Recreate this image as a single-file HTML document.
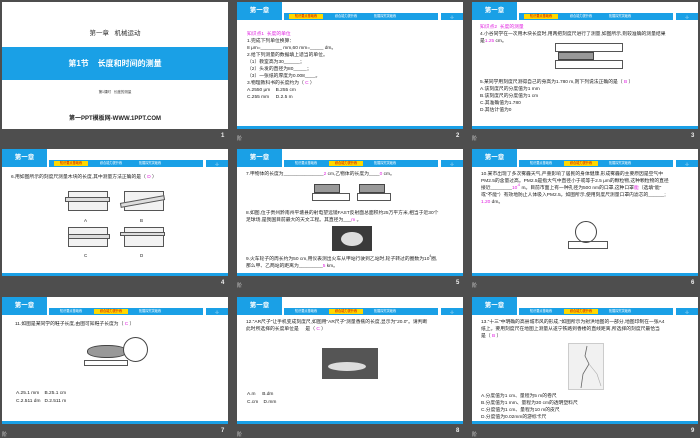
<!DOCTYPE html>
<html><head><meta charset="utf-8">
<style>
*{margin:0;padding:0;box-sizing:border-box}
body{width:700px;height:438px;background:#4e4e4e;position:relative;overflow:hidden;font-family:"Liberation Sans","Noto Sans CJK SC",sans-serif;color:#222}
sup{line-height:0;font-size:3.2px;vertical-align:top;position:relative;top:-0.5px}
.s{position:absolute;width:226px;height:127px;background:#fff;overflow:hidden}
.s .bb{position:absolute;left:0;bottom:0;width:100%;height:3px;background:#1aa0e6}
.ch{position:absolute;left:0;top:0;width:45px;height:18px;background:#1aa0e6;color:#fff;font-size:6.5px;font-weight:bold;text-align:center;line-height:18px}
.tb{position:absolute;left:47px;top:11px;width:154px;height:7px;background:#1aa0e6;font-size:3.2px;color:#fff;line-height:7px}
.tb span{position:absolute;top:1px;height:5px;line-height:5px;width:34px;text-align:center}
.tb span.y{background:#ffd800;color:#c00}
.pn{position:absolute;left:204px;top:11px;width:22px;height:7px;background:#1aa0e6;color:#fff;font-size:4px;text-align:center;line-height:7px}
.t{position:absolute;font-size:4.8px;line-height:7px;height:7px;white-space:nowrap;color:#1a1a1a}
.m{color:#e020e0}
.num{position:absolute;color:#eee;font-size:6px;font-weight:bold}
.ic{position:absolute;color:#ccc;font-size:5px}
.box{position:absolute;border:0.6px solid #555}
</style></head><body>

<!-- Slide 1 -->
<div class="s" style="left:2px;top:2px">
 <div style="position:absolute;top:25px;width:100%;text-align:center;font-size:6.5px;color:#333">第一章&nbsp;&nbsp;&nbsp;机械运动</div>
 <div style="position:absolute;top:45px;left:0;width:100%;height:33px;background:#1aa0e6;color:#fff;font-weight:bold;font-size:8px;text-align:center;line-height:33px">第1节&nbsp;&nbsp;&nbsp;&nbsp;长度和时间的测量</div>
 <div style="position:absolute;top:88px;width:100%;text-align:center;font-size:3.5px;color:#333">第1课时&nbsp;&nbsp;&nbsp;长度的测量</div>
 <div style="position:absolute;top:111px;width:100%;text-align:center;font-size:6px;font-weight:bold;color:#222">第一PPT模板网-WWW.1PPT.COM</div>
</div>
<div class="num" style="left:221px;top:133px">1</div>

<!-- Slide 2 -->
<div class="s" style="left:237px;top:2px">
 <div class="ch">第一章</div>
 <div class="tb"><span class="y" style="left:5px">知识要点基础练</span><span style="left:45px">综合能力提升练</span><span style="left:84px">拓展探究突破练</span></div>
 <div class="pn">-|-</div>
 <div class="t m" style="left:10px;top:29px">知识点1&nbsp;&nbsp;长度的单位</div>
 <div class="t" style="left:10px;top:36px">1.完成下列单位换算：</div>
 <div class="t" style="left:10px;top:43px">8 μm=________ mm,60 mm=_____ dm。</div>
 <div class="t" style="left:10px;top:50px">2.给下列测量的数据填上适当的单位。</div>
 <div class="t" style="left:10px;top:57px">（1）教室高为30______；</div>
 <div class="t" style="left:10px;top:64px">（2）头发的直径为80_____；</div>
 <div class="t" style="left:10px;top:71px">（3）一张纸的厚度为0.008____。</div>
 <div class="t" style="left:10px;top:78px">3.物理教科书的长度约为（ <span class="m">C</span> ）</div>
 <div class="t" style="left:10px;top:85px">A.2550 μm&nbsp;&nbsp;&nbsp;&nbsp;B.255 cm</div>
 <div class="t" style="left:10px;top:92px">C.255 mm&nbsp;&nbsp;&nbsp;&nbsp;&nbsp;D.2.5 m</div>
 <div class="bb"></div>
</div>
<div class="ic" style="left:237px;top:135px">阶</div>
<div class="num" style="left:456px;top:133px">2</div>

<!-- Slide 3 -->
<div class="s" style="left:472px;top:2px">
 <div class="ch">第一章</div>
 <div class="tb"><span class="y" style="left:5px">知识要点基础练</span><span style="left:45px">综合能力提升练</span><span style="left:84px">拓展探究突破练</span></div>
 <div class="pn">-|-</div>
 <div class="t m" style="left:8px;top:22px">知识点2&nbsp;&nbsp;长度的测量</div>
 <div class="t" style="left:8px;top:29px">4.小谷同学在一次用木块长度时,用两把刻度尺进行了测量,如图所示,则较准确的测量结果</div>
 <div class="t" style="left:8px;top:36px">是<span class="m">1.25</span>&nbsp;cm。</div>
 <div class="box" style="left:83px;top:41px;width:68px;height:9px"></div>
 <div style="position:absolute;left:86px;top:50px;width:36px;height:8px;background:#999;border:0.5px solid #444"></div>
 <div class="box" style="left:83px;top:58px;width:68px;height:9px"></div>
 <div class="t" style="left:8px;top:77px">5.某同学用刻度尺测得自己的身高为1.780 m,则下列说法正确的是（ <span class="m">B</span> ）</div>
 <div class="t" style="left:8px;top:84px">A.该刻度尺的分度值为1 mm</div>
 <div class="t" style="left:8px;top:91px">B.该刻度尺的分度值为1 cm</div>
 <div class="t" style="left:8px;top:98px">C.其准确值为1.780</div>
 <div class="t" style="left:8px;top:105px">D.其估计值为0</div>
 <div class="bb"></div>
</div>
<div class="ic" style="left:472px;top:135px">阶</div>
<div class="num" style="left:691px;top:133px">3</div>

<!-- Slide 4 -->
<div class="s" style="left:2px;top:149px">
 <div class="ch">第一章</div>
 <div class="tb"><span class="y" style="left:5px">知识要点基础练</span><span style="left:45px">综合能力提升练</span><span style="left:84px">拓展探究突破练</span></div>
 <div class="pn">-|-</div>
 <div class="t" style="left:9px;top:25px">6.用如图所示的刻度尺测量木块的长度,其中测量方法正确的是（ <span class="m">D</span> ）</div>
 <div class="box" style="left:66px;top:42px;width:40px;height:20px;background:#f2f2f2"></div>
 <div class="box" style="left:63px;top:48px;width:45px;height:5px;background:#ddd"></div>
 <div class="t" style="left:82px;top:68px;font-size:4.5px">A</div>
 <div class="box" style="left:122px;top:42px;width:40px;height:20px;background:#f2f2f2"></div>
 <div class="box" style="left:118px;top:50px;width:45px;height:5px;background:#ddd;transform:rotate(-10deg)"></div>
 <div class="t" style="left:138px;top:68px;font-size:4.5px">B</div>
 <div class="box" style="left:66px;top:78px;width:40px;height:20px;background:#f2f2f2"></div>
 <div class="box" style="left:66px;top:85px;width:42px;height:5px;background:#ddd"></div>
 <div class="t" style="left:82px;top:103px;font-size:4.5px">C</div>
 <div class="box" style="left:122px;top:78px;width:40px;height:20px;background:#f2f2f2"></div>
 <div class="box" style="left:118px;top:83px;width:45px;height:4px;background:#ddd"></div>
 <div class="t" style="left:138px;top:103px;font-size:4.5px">D</div>
 <div class="bb"></div>
</div>
<div class="num" style="left:221px;top:280px">4</div>

<!-- Slide 5 -->
<div class="s" style="left:237px;top:149px">
 <div class="ch">第一章</div>
 <div class="tb"><span style="left:5px">知识要点基础练</span><span class="y" style="left:45px">综合能力提升练</span><span style="left:84px">拓展探究突破练</span></div>
 <div class="pn">-|-</div>
 <div class="t" style="left:9px;top:22px">7.甲物体的长度为_______________<span class="m">2</span>&nbsp;cm,乙物体的长度为____<span class="m">0</span>&nbsp;cm。</div>
 <div style="position:absolute;left:77px;top:35px;width:26px;height:9px;background:#999;border:0.5px solid #444"></div>
 <div class="box" style="left:75px;top:44px;width:38px;height:8px"></div>
 <div style="position:absolute;left:122px;top:35px;width:26px;height:9px;background:#999;border:0.5px solid #444"></div>
 <div class="box" style="left:120px;top:44px;width:34px;height:8px"></div>
 <div class="t" style="left:9px;top:61px">8.如图,位于贵州黔南州平塘县的射电望远镜FAST反射面总面积约25万平方米,相当于近30个</div>
 <div class="t" style="left:9px;top:68px">足球场,是我国目前最大的天文工程。其直径为___<span class="m">m</span>&nbsp;。</div>
 <div style="position:absolute;left:95px;top:77px;width:40px;height:25px;background:#3a3a3a"><div style="position:absolute;left:9px;top:6px;width:22px;height:14px;border-radius:50%;background:#ddd"></div></div>
 <div class="t" style="left:9px;top:107px">9.火车轮子的周长约为50 cm,用仪表测出火车从甲站行驶到乙站时,轮子转过的圈数为10<sup>4</sup>圈,</div>
 <div class="t" style="left:9px;top:114px">那么甲、乙两站的距离为_________<span class="m">5</span>&nbsp;km。</div>
 <div class="bb"></div>
</div>
<div class="ic" style="left:237px;top:282px">阶</div>
<div class="num" style="left:456px;top:280px">5</div>

<!-- Slide 6 -->
<div class="s" style="left:472px;top:149px">
 <div class="ch">第一章</div>
 <div class="tb"><span style="left:5px">知识要点基础练</span><span class="y" style="left:45px">综合能力提升练</span><span style="left:84px">拓展探究突破练</span></div>
 <div class="pn">-|-</div>
 <div class="t" style="left:9px;top:22px">10.某市出现了多次雾霾天气,严重影响了居民的身体健康,形成雾霾的主要原因是空气中</div>
 <div class="t" style="left:9px;top:29px">PM2.5的含量过高。PM2.5是指大气中直径小于或等于2.5 μm的颗粒物,这种颗粒物的直径</div>
 <div class="t" style="left:9px;top:36px">接近________<span class="m">10<sup>-6</sup></span>&nbsp;m。目前市面上有一种孔径为500 nm的口罩,这种口罩<span class="m">能</span>（选填"能"</div>
 <div class="t" style="left:9px;top:43px">或"不能"）有效地防止人体吸入PM2.5。如图所示,使用刻度尺测量口罩内滤芯的______;</div>
 <div class="t m" style="left:9px;top:50px">1.20&nbsp;<span style="color:#222">dm。</span></div>
 <div style="position:absolute;left:103px;top:72px;width:22px;height:22px;border:0.6px solid #444;border-radius:50%"></div>
 <div class="box" style="left:96px;top:92px;width:40px;height:8px"></div>
 <div class="bb"></div>
</div>
<div class="ic" style="left:472px;top:282px">阶</div>
<div class="num" style="left:691px;top:280px">6</div>

<!-- Slide 7 -->
<div class="s" style="left:2px;top:297px">
 <div class="ch">第一章</div>
 <div class="tb"><span style="left:5px">知识要点基础练</span><span class="y" style="left:45px">综合能力提升练</span><span style="left:84px">拓展探究突破练</span></div>
 <div class="pn">-|-</div>
 <div class="t" style="left:13px;top:24px">11.如图是某同学的鞋子长度,由图可知鞋子长度为（ <span class="m">C</span> ）</div>
 <div style="position:absolute;left:85px;top:48px;width:40px;height:13px;background:#999;border:0.5px solid #444;border-radius:45%"></div>
 <div class="box" style="left:82px;top:63px;width:44px;height:6px"></div>
 <div style="position:absolute;left:121px;top:40px;width:25px;height:25px;border:0.6px solid #444;border-radius:50%;background:#fff"></div>
 <div class="t" style="left:14px;top:93px">A.25.1 mm&nbsp;&nbsp;&nbsp;&nbsp;B.25.1 cm</div>
 <div class="t" style="left:14px;top:101px">C.2.511 dm&nbsp;&nbsp;&nbsp;D.2.511 m</div>
 <div class="bb"></div>
</div>
<div class="ic" style="left:2px;top:431px">阶</div>
<div class="num" style="left:221px;top:428px">7</div>

<!-- Slide 8 -->
<div class="s" style="left:237px;top:297px">
 <div class="ch">第一章</div>
 <div class="tb"><span style="left:5px">知识要点基础练</span><span class="y" style="left:45px">综合能力提升练</span><span style="left:84px">拓展探究突破练</span></div>
 <div class="pn">-|-</div>
 <div class="t" style="left:9px;top:22px">12."AR尺子"让手机变成刻度尺,如图用"AR尺子"测量香蕉的长度,显示为"20.0"。请判断</div>
 <div class="t" style="left:9px;top:29px">此时所选择的长度单位是&nbsp;&nbsp;&nbsp;&nbsp;&nbsp;是（ <span class="m">C</span> ）</div>
 <div style="position:absolute;left:85px;top:51px;width:56px;height:31px;background:#555"><div style="position:absolute;left:6px;top:14px;width:38px;height:9px;border-radius:50%;background:#ddd"></div></div>
 <div class="t" style="left:10px;top:94px">A.m&nbsp;&nbsp;&nbsp;&nbsp;&nbsp;B.dm</div>
 <div class="t" style="left:10px;top:102px">C.cm&nbsp;&nbsp;&nbsp;&nbsp;D.mm</div>
 <div class="bb"></div>
</div>
<div class="ic" style="left:237px;top:431px">阶</div>
<div class="num" style="left:456px;top:428px">8</div>

<!-- Slide 9 -->
<div class="s" style="left:472px;top:297px">
 <div class="ch">第一章</div>
 <div class="tb"><span style="left:5px">知识要点基础练</span><span class="y" style="left:45px">综合能力提升练</span><span style="left:84px">拓展探究突破练</span></div>
 <div class="pn">-|-</div>
 <div class="t" style="left:9px;top:22px">13."十三"中明确的高县城市风的形成,"如图所示为射洪地图的一部分,地图印制在一张A4</div>
 <div class="t" style="left:9px;top:29px">纸上。要用刻度尺在地图上测量从遂宁铁路到香楼的直线距离,所选择的刻度尺最恰当</div>
 <div class="t" style="left:9px;top:36px">是（ <span class="m">B</span> ）</div>
 <div style="position:absolute;left:96px;top:46px;width:36px;height:47px;background:#f1f1f1;border:0.4px solid #ccc">
  <svg width="36" height="47"><path d="M18 2 L16 12 L20 20 L14 30 L12 44" stroke="#666" stroke-width="0.8" fill="none"/><path d="M20 20 L28 30 L32 42" stroke="#aaa" stroke-width="0.6" fill="none"/></svg>
 </div>
 <div class="t" style="left:9px;top:96px">A.分度值为1 cm、量程为5 m的卷尺</div>
 <div class="t" style="left:9px;top:103px">B.分度值为1 mm、量程为30 cm的透明塑料尺</div>
 <div class="t" style="left:9px;top:110px">C.分度值为1 cm、量程为10 m的皮尺</div>
 <div class="t" style="left:9px;top:117px">D.分度值为0.02mm的游标卡尺</div>
 <div class="bb"></div>
</div>
<div class="ic" style="left:472px;top:431px">阶</div>
<div class="num" style="left:691px;top:428px">9</div>

</body></html>
